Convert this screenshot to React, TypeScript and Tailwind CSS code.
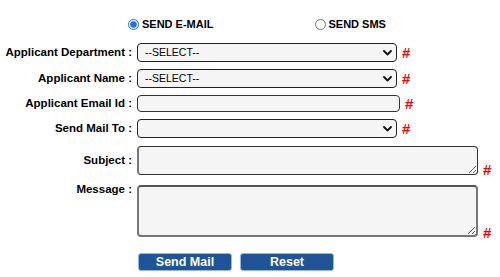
import { useState } from "react";

function Chevron() {
  return (
    <svg
      className="pointer-events-none absolute right-[5px] top-1/2 -translate-y-1/2 w-[9px] h-[6px]"
      viewBox="0 0 9 6"
      fill="none"
      stroke="#111"
      strokeWidth={1.8}
      strokeLinecap="round"
      strokeLinejoin="round"
    >
      <path d="M1 1l3.5 3.5L8 1" />
    </svg>
  );
}

function Req({ className = "" }: { className?: string }) {
  return <span className={`text-[#ff0000] font-bold text-[15px] leading-none ${className}`}>#</span>;
}

function Label({ children, top = false }: { children: string; top?: boolean }) {
  return (
    <div className={`w-[133px] shrink-0 text-right pr-px font-bold text-[11.5px] text-black leading-none whitespace-nowrap ${top ? "self-start -mt-px" : "pt-px"}`}>
      {children}
    </div>
  );
}

function SelectRow({ label, options }: { label: string; options: string[] }) {
  return (
    <div className="flex items-center h-[19px]">
      <Label>{label}</Label>
      <div className="relative ml-1 w-[260px] h-full">
        <select className="block appearance-none w-full h-full border border-[#222] rounded-[4px] bg-[#f5f5f5] pl-[7px] text-[10.5px] text-black leading-none outline-none">
          {options.map((o) => (
            <option key={o}>{o}</option>
          ))}
        </select>
        <Chevron />
      </div>
      <Req className="ml-[5px]" />
    </div>
  );
}

export default function App() {
  const [mode, setMode] = useState("email");

  return (
    <div className="w-[500px] h-[277px] bg-white font-['Liberation_Sans',Arial,sans-serif] overflow-hidden">
      <div className="flex items-center h-[12px] pt-[18px] box-content text-[11px] font-bold text-black">
        <label className="flex items-center ml-[128px]">
          <input
            type="radio"
            name="mode"
            checked={mode === "email"}
            onChange={() => setMode("email")}
            className="block w-[11px] h-[11px] m-0 accent-[#1a73e8]"
          />
          <span className="ml-[3px]">SEND E-MAIL</span>
        </label>
        <label className="flex items-center ml-[101px]">
          <input
            type="radio"
            name="mode"
            checked={mode === "sms"}
            onChange={() => setMode("sms")}
            className="block w-[11px] h-[11px] m-0 accent-[#1a73e8]"
          />
          <span className="ml-[3px]">SEND SMS</span>
        </label>
      </div>

      <div className="mt-[13px]">
        <SelectRow label="Applicant Department :" options={["--SELECT--"]} />
      </div>
      <div className="mt-[7px]">
        <SelectRow label="Applicant Name :" options={["--SELECT--"]} />
      </div>

      <div className="flex items-center h-[17px] mt-[7px]">
        <Label>Applicant Email Id :</Label>
        <input
          type="text"
          className="block ml-1 w-[263px] h-full border border-[#333] rounded-[4px] bg-[#f5f5f5] outline-none"
        />
        <Req className="ml-[5px]" />
      </div>

      <div className="mt-[7px]">
        <SelectRow label="Send Mail To :" options={[""]} />
      </div>

      <div className="flex items-center h-[29px] mt-[8px]">
        <Label>Subject :</Label>
        <textarea className="block ml-1 w-[341px] h-full border border-[#333] border-l-2 border-l-[#777] rounded-[4px] bg-[#f5f5f5] outline-none" />
        <Req className="ml-[5px] self-end -mb-[2px]" />
      </div>

      <div className="flex items-center h-[52px] mt-[10px]">
        <Label top>Message :</Label>
        <textarea className="block ml-1 w-[341px] h-full border-2 border-[#777] border-t-[#555] rounded-[4px] bg-[#f5f5f5] outline-none" />
        <Req className="ml-[5px] self-end -mb-[3px]" />
      </div>

      <div className="flex mt-[16px] ml-[138px] gap-[8px]">
        <button className="w-[94px] h-[18px] rounded-[3px] border border-[#8fb8e6] bg-[#1f5597] text-white font-bold text-[12.5px] leading-none">
          Send Mail
        </button>
        <button className="w-[94px] h-[18px] rounded-[3px] border border-[#8fb8e6] bg-[#1f5597] text-white font-bold text-[12.5px] leading-none">
          Reset
        </button>
      </div>
    </div>
  );
}
